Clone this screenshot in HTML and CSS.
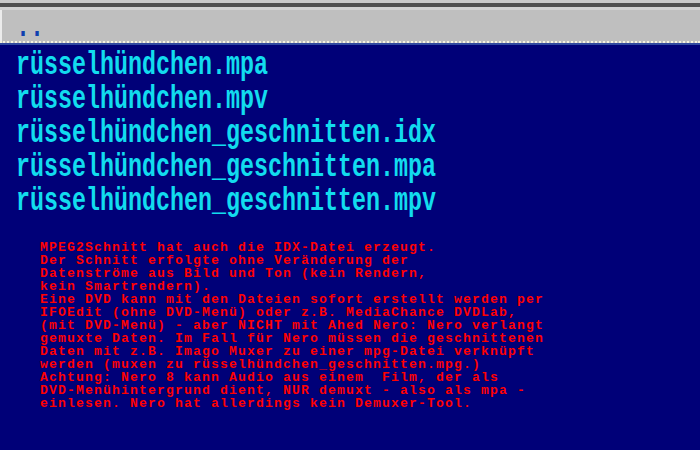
FILE: index.html
```html
<!DOCTYPE html>
<html lang="de">
<head>
<meta charset="utf-8">
<title>MPEG2Schnitt</title>
<link rel="stylesheet" href="styles.css">
</head>
<body>
<div class="screen">
  <div class="header">
    <div class="band"></div>
    <div class="bar">
      <div class="row parent"><span class="name">..</span></div>
    </div>
    <div class="edge"></div>
  </div>
  <div class="files">
    <div class="row"><span class="name">rüsselhündchen.mpa</span></div>
    <div class="row"><span class="name">rüsselhündchen.mpv</span></div>
    <div class="row"><span class="name">rüsselhündchen_geschnitten.idx</span></div>
    <div class="row"><span class="name">rüsselhündchen_geschnitten.mpa</span></div>
    <div class="row"><span class="name">rüsselhündchen_geschnitten.mpv</span></div>
  </div>
  <div class="note">MPEG2Schnitt hat auch die IDX-Datei erzeugt.
Der Schnitt erfolgte ohne Veränderung der
Datenströme aus Bild und Ton (kein Rendern,
kein Smartrendern).
Eine DVD kann mit den Dateien sofort erstellt werden per
IFOEdit (ohne DVD-Menü) oder z.B. MediaChance DVDLab,
(mit DVD-Menü) - aber NICHT mit Ahed Nero: Nero verlangt
gemuxte Daten. Im Fall für Nero müssen die geschnittenen
Daten mit z.B. Imago Muxer zu einer mpg-Datei verknüpft
werden (muxen zu rüsselhündchen_geschnitten.mpg.)
Achtung: Nero 8 kann Audio aus einem  Film, der als
DVD-Menühintergrund dient, NUR demuxt - also als mpa -
einlesen. Nero hat allerdings kein Demuxer-Tool.</div>
</div>
</body>
</html>
```
FILE: styles.css
```css
html, body {
  margin: 0;
  padding: 0;
  background: #000078;
}

.screen {
  width: 700px;
  height: 450px;
  overflow: hidden;
  background: #000078;
}

.header {
  border-top: 3px solid #cacaca;
}

.band {
  height: 4px;
  background: #505050;
}

.bar {
  height: 30px;
  border-top: 3px solid #d2d2d2;
  border-bottom: 2px dotted #f4f2e0;
  background: #bfbfbf;
  box-shadow: inset 2px 0 0 #ececec;
  padding-left: 16px;
  padding-top: 1px;
  box-sizing: content-box;
}

.edge {
  height: 2px;
  background: #3048a0;
}

.row {
  height: 34px;
  line-height: 34px;
  white-space: nowrap;
}

.name {
  display: inline-block;
  font-family: "Liberation Mono", "Courier New", monospace;
  font-weight: bold;
  font-size: 33px;
  color: #12dcee;
  transform: scaleX(0.707);
  transform-origin: left center;
}

.bar .row {
  height: 30px;
}

.parent .name {
  color: #1040b0;
}

.files {
  padding-left: 16px;
  padding-top: 4px;
}

.note {
  margin-top: 22px;
  margin-left: 40px;
  white-space: pre;
  font-family: "Liberation Mono", "Courier New", monospace;
  font-weight: bold;
  font-size: 13px;
  letter-spacing: 1.2px;
  line-height: 13px;
  color: #ff0000;
}
```
